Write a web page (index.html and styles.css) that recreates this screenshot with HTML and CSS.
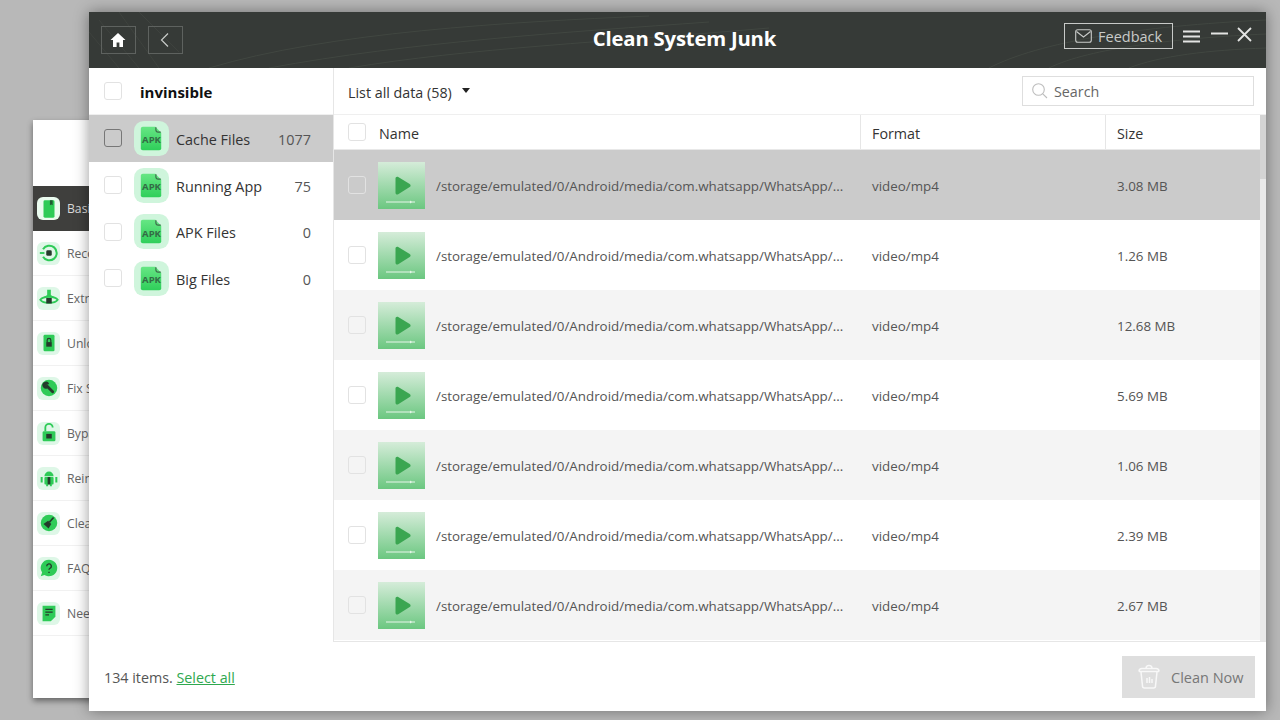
FILE: index.html
```html
<!DOCTYPE html>
<html lang="en">
<head>
<meta charset="utf-8">
<title>Clean System Junk</title>
<link rel="stylesheet" href="styles.css">
</head>
<body>
<svg width="0" height="0" class="defs">
  <defs>
    <linearGradient id="apkg" x1="0" y1="0" x2="0" y2="1"><stop offset="0" stop-color="#66e684"/><stop offset="1" stop-color="#2fcf5a"/></linearGradient>
    <linearGradient id="thumbg" x1="0" y1="0" x2="0" y2="1"><stop offset="0" stop-color="#d5ecd9"/><stop offset="1" stop-color="#6bc780"/></linearGradient>
    <symbol id="apk" viewBox="0 0 36 36">
      <rect width="36" height="36" rx="10" fill="#cff5dc"/>
      <path d="M7 8a2 2 0 0 1 2-2H22L28 12V28a2 2 0 0 1-2 2H9a2 2 0 0 1-2-2Z" fill="url(#apkg)"/>
      <path d="M22.500 6.500V9a2.500 2.500 0 0 0 2.500 2.500H27.500" fill="none" stroke="#3e6b4b" stroke-width="1.200"/>
    </symbol>
    <symbol id="thumb" viewBox="0 0 47 47">
      <rect width="47" height="47" fill="url(#thumbg)"/>
      <path d="M17.500 16.500c0-1.500 1.400-2.300 2.700-1.500l11.500 7c1.200.8 1.200 2.400 0 3.100l-11.500 7.100c-1.300.8-2.700 0-2.700-1.500Z" fill="#3aa651"/>
      <path d="M8 40H37" stroke="#e6f5e9" stroke-width="1"/>
      <path d="M32 38.500l2 1.500-2 1.500Z" fill="#e6f5e9"/>
    </symbol>
  </defs>
</svg>

<section class="back-window">
  <div class="back-top"></div>
  <ul class="back-list">
    <li class="back-item active"><span class="back-ico white"><svg viewBox="0 0 24 24"><path d="M6 4a1.500 1.500 0 0 1 1.500-1.500h9A1.500 1.500 0 0 1 18 4v16a1.500 1.500 0 0 1-1.500 1.500h-9A1.500 1.500 0 0 1 6 20z" fill="#2ecb57"/><path d="M13 2.500h3V8l-1.500-1L13 8z" fill="#1f5b33"/></svg></span><span>Basic</span></li>
    <li class="back-item"><span class="back-ico"><svg viewBox="0 0 24 24"><path d="M5.500 8a8 8 0 1 1 0 8" fill="none" stroke="#2ecb57" stroke-width="2.200"/><rect x="9" y="9" width="6" height="6" rx="1.500" fill="#243a2b"/><path d="M2 12h5" stroke="#2ecb57" stroke-width="2"/></svg></span><span>Recover</span></li>
    <li class="back-item"><span class="back-ico"><svg viewBox="0 0 24 24"><path d="M2.500 14c3-4.500 16-4.500 19 0-3 4.500-16 4.500-19 0Z" fill="none" stroke="#2ecb57" stroke-width="2"/><path d="M10 3h4v6h-4z" fill="#2ecb57"/><path d="M5.500 11.500l6.500-4 6.500 4z" fill="#2ecb57"/><rect x="9" y="12" width="6" height="6" fill="#243a2b"/></svg></span><span>Extract</span></li>
    <li class="back-item"><span class="back-ico"><svg viewBox="0 0 24 24"><rect x="6" y="3" width="12" height="18" rx="1.500" fill="#2ecb57"/><rect x="9" y="11" width="6" height="5" fill="#243a2b"/><path d="M10 11V9a2 2 0 0 1 4 0v2" fill="none" stroke="#243a2b" stroke-width="1.300"/></svg></span><span>Unlock</span></li>
    <li class="back-item"><span class="back-ico"><svg viewBox="0 0 24 24"><circle cx="12" cy="12" r="9" fill="#2ecb57"/><path d="M10 10l6 6" stroke="#243a2b" stroke-width="3.200" stroke-linecap="round"/><path d="M11.500 6.500a3.800 3.800 0 1 0 0 5l-3-2.300z" fill="#243a2b" transform="rotate(20 9 9)"/></svg></span><span>Fix System</span></li>
    <li class="back-item"><span class="back-ico"><svg viewBox="0 0 24 24"><rect x="5" y="10" width="14" height="11" rx="1.500" fill="#2ecb57"/><path d="M8 10V6a4 4 0 0 1 8 0" fill="none" stroke="#2ecb57" stroke-width="2"/><rect x="9" y="13" width="6" height="5" fill="#243a2b"/></svg></span><span>Bypass</span></li>
    <li class="back-item"><span class="back-ico"><svg viewBox="0 0 24 24"><path d="M7 10a5 5 0 0 1 10 0z" fill="#2ecb57"/><rect x="7" y="11" width="10" height="8" rx="1" fill="#2ecb57"/><path d="M4 11v6M20 11v6M10 18v3M14 18v3" stroke="#2ecb57" stroke-width="2.200"/><path d="M12 11v8" stroke="#243a2b" stroke-width="3"/></svg></span><span>Reinstall</span></li>
    <li class="back-item"><span class="back-ico"><svg viewBox="0 0 24 24"><circle cx="12" cy="12" r="9" fill="#2ecb57"/><path d="M17 6l-4.500 5" stroke="#243a2b" stroke-width="1.800"/><path d="M6 13l5-3.500 3.500 3.500-3 5z" fill="#243a2b"/></svg></span><span>Clean</span></li>
    <li class="back-item"><span class="back-ico"><svg viewBox="0 0 24 24"><path d="M12 3a9 9 0 1 1-5 16.500L3 21l1.500-4A9 9 0 0 1 12 3Z" fill="#2ecb57"/><path d="M9.500 10a2.500 2.500 0 1 1 3.500 2.300c-.7.400-1 .8-1 1.700M12 16v1.500" fill="none" stroke="#243a2b" stroke-width="1.500"/></svg></span><span>FAQ</span></li>
    <li class="back-item"><span class="back-ico"><svg viewBox="0 0 24 24"><path d="M5 4h14v12l-5 5H5z" fill="#2ecb57"/><path d="M8 8h8M8 11h8M8 14h4" stroke="#243a2b" stroke-width="1.500"/></svg></span><span>Need</span></li>
  </ul>
</section>

<main class="window">
  <header class="titlebar">
    <svg class="texture" viewBox="0 0 1177 56" preserveAspectRatio="none">
      <path d="M120 56C240 20 420 10 560 4M180 56C320 30 480 20 620 10M260 56C380 36 520 30 680 16M900 56C950 30 1050 14 1177 8M960 56C1000 36 1090 26 1177 22M1040 56C1070 44 1120 38 1177 36" fill="none" stroke="#4a5149" stroke-width="1"/>
      <path d="M0 20L30 56M10 8L50 56M30 0L70 56M50 0L90 40" fill="none" stroke="#454a45" stroke-width="1"/>
    </svg>
    <div class="nav-btns">
      <button class="nav-btn" aria-label="Home"><svg width="18" height="18" viewBox="0 0 18 18"><path d="M9 2 1.500 9H4v7h3.600v-4.500h2.800V16H14V9h2.500Z" fill="#fff"/></svg></button>
      <button class="nav-btn" aria-label="Back"><svg width="18" height="18" viewBox="0 0 18 18"><path d="M12 2.500 5.500 9l6.500 6.500" fill="none" stroke="#c9cbc9" stroke-width="1.200"/></svg></button>
    </div>
    <h1 class="title">Clean System Junk</h1>
    <div class="win-tools">
      <button class="feedback"><svg width="17" height="14" viewBox="0 0 17 14"><rect x=".7" y=".7" width="15.600" height="12.600" rx="2" fill="none" stroke="#c9cbc9" stroke-width="1.100"/><path d="M1.500 2.500 8.500 8l7-5.500" fill="none" stroke="#c9cbc9" stroke-width="1.100"/></svg><span>Feedback</span></button>
      <svg class="menu-ico" width="17" height="13" viewBox="0 0 17 13"><path d="M0 1.500h17M0 6.500h17M0 11.500h17" stroke="#e3e4e3" stroke-width="2"/></svg>
      <svg class="min-ico" width="17" height="13" viewBox="0 0 17 13"><path d="M0 1.500h17" stroke="#e3e4e3" stroke-width="2"/></svg>
      <svg class="close-ico" width="15" height="15" viewBox="0 0 15 15"><path d="M1 1l13 13M14 1 1 14" stroke="#e3e4e3" stroke-width="1.800"/></svg>
    </div>
  </header>

  <div class="content">
    <aside class="side">
      <div class="side-head"><span class="check"></span><strong class="low">invinsible</strong></div>
      <div class="side-row selected"><span class="check dark"></span><svg class="apk"><use href="#apk"/></svg><span class="apk-label">APK</span><span class="side-name low">Cache Files</span><span class="side-count low">1077</span></div>
      <div class="side-row"><span class="check"></span><svg class="apk"><use href="#apk"/></svg><span class="apk-label">APK</span><span class="side-name low">Running App</span><span class="side-count low">75</span></div>
      <div class="side-row"><span class="check"></span><svg class="apk"><use href="#apk"/></svg><span class="apk-label">APK</span><span class="side-name low">APK Files</span><span class="side-count low">0</span></div>
      <div class="side-row"><span class="check"></span><svg class="apk"><use href="#apk"/></svg><span class="apk-label">APK</span><span class="side-name low">Big Files</span><span class="side-count low">0</span></div>
    </aside>

    <section class="panel">
      <div class="toolbar">
        <div class="filter"><span class="low">List all data (58)</span><i class="caret"></i></div>
        <div class="search"><svg width="18" height="18" viewBox="0 0 18 18"><circle cx="7.500" cy="7.500" r="5.800" fill="none" stroke="#bdbdbd" stroke-width="1.100"/><path d="M11.800 11.800 16 16" stroke="#bdbdbd" stroke-width="1.100"/></svg><span>Search</span></div>
      </div>
      <div class="table-wrap">
        <div class="table">
          <div class="thead">
            <div class="th th-name"><span class="check"></span><span class="low">Name</span></div>
            <div class="th th-format"><span class="low">Format</span></div>
            <div class="th th-size"><span class="low">Size</span></div>
          </div>
          <div class="row current"><span class="check faint"></span><svg class="thumb"><use href="#thumb"/></svg><span class="path low">/storage/emulated/0/Android/media/com.whatsapp/WhatsApp/...</span><span class="fmt low">video/mp4</span><span class="size low">3.08 MB</span></div>
          <div class="row"><span class="check faint"></span><svg class="thumb"><use href="#thumb"/></svg><span class="path low">/storage/emulated/0/Android/media/com.whatsapp/WhatsApp/...</span><span class="fmt low">video/mp4</span><span class="size low">1.26 MB</span></div>
          <div class="row alt"><span class="check faint"></span><svg class="thumb"><use href="#thumb"/></svg><span class="path low">/storage/emulated/0/Android/media/com.whatsapp/WhatsApp/...</span><span class="fmt low">video/mp4</span><span class="size low">12.68 MB</span></div>
          <div class="row"><span class="check faint"></span><svg class="thumb"><use href="#thumb"/></svg><span class="path low">/storage/emulated/0/Android/media/com.whatsapp/WhatsApp/...</span><span class="fmt low">video/mp4</span><span class="size low">5.69 MB</span></div>
          <div class="row alt"><span class="check faint"></span><svg class="thumb"><use href="#thumb"/></svg><span class="path low">/storage/emulated/0/Android/media/com.whatsapp/WhatsApp/...</span><span class="fmt low">video/mp4</span><span class="size low">1.06 MB</span></div>
          <div class="row"><span class="check faint"></span><svg class="thumb"><use href="#thumb"/></svg><span class="path low">/storage/emulated/0/Android/media/com.whatsapp/WhatsApp/...</span><span class="fmt low">video/mp4</span><span class="size low">2.39 MB</span></div>
          <div class="row alt"><span class="check faint"></span><svg class="thumb"><use href="#thumb"/></svg><span class="path low">/storage/emulated/0/Android/media/com.whatsapp/WhatsApp/...</span><span class="fmt low">video/mp4</span><span class="size low">2.67 MB</span></div>
        </div>
        <div class="scrollbar"><div class="scroll-thumb"></div></div>
      </div>
    </section>
  </div>

  <footer class="footer">
    <div class="count low">134 items. <a href="#">Select all</a></div>
    <button class="clean"><svg width="24" height="26" viewBox="0 0 24 26"><path d="M2 7.500h20M4 8l1.500 14a2 2 0 0 0 2 2h9a2 2 0 0 0 2-2L20 8M2 7.500c0-2 1-3 3-3h14c2 0 3 1 3 3M9 4.500C9 2 10 1.500 12 1.500S15 2 15 4.500M10 14v5M12.500 13v6M15 15v4" fill="none" stroke="#f8f8f8" stroke-width="1.500"/></svg><span class="low">Clean Now</span></button>
  </footer>
</main>
</body>
</html>
```

FILE: styles.css
```css
* { box-sizing: border-box; }
html, body { margin: 0; padding: 0; }
body {
  width: 1280px;
  height: 720px;
  overflow: hidden;
  position: relative;
  background: #b8b8b8;
  font-family: "Open Sans", "Noto Sans", sans-serif;
  font-size: 14px;
  color: #333;
}
.defs { position: absolute; }
.low { padding-top: 2px; }

/* back window */
.back-window {
  position: absolute;
  left: 33px;
  top: 120px;
  width: 200px;
  height: 578px;
  background: #fff;
  box-shadow: 0 3px 6px rgba(0,0,0,.45);
}
.back-top { height: 66px; }
.back-list { list-style: none; margin: 0; padding: 0; }
.back-item {
  height: 45px;
  display: flex;
  align-items: center;
  gap: 7px;
  padding-left: 4px;
  border-bottom: 1px solid #f1f1f1;
  color: #666;
  font-size: 12.2px;
}
.back-item.active { background: #3f3f3d; color: #d9d9d9; border-bottom: 0; }
.back-ico {
  width: 23px;
  height: 23px;
  border-radius: 6px;
  background: #def7e7;
  display: flex;
  align-items: center;
  justify-content: center;
}
.back-ico svg { width: 22px; height: 22px; }
.back-ico.white { background: #eafbef; }

/* main window */
.window {
  position: absolute;
  left: 89px;
  top: 12px;
  width: 1177px;
  height: 699px;
  background: #fff;
  display: flex;
  flex-direction: column;
  box-shadow: 0 0 14px rgba(0,0,0,.4);
}
.titlebar {
  height: 56px;
  flex: none;
  background: #363a37;
  position: relative;
  display: flex;
  align-items: center;
  justify-content: space-between;
  padding: 0 14px 0 12px;
}
.texture { position: absolute; inset: 0; width: 100%; height: 100%; opacity: .55; }
.nav-btns { display: flex; gap: 12px; position: relative; }
.nav-btn {
  width: 35px;
  height: 28px;
  padding: 0 2px 0 0;
  background: transparent;
  border: 1px solid #5e625f;
  display: flex;
  align-items: center;
  justify-content: center;
}
.title {
  position: absolute;
  left: 0;
  right: 0;
  top: 11px;
  margin: 0;
  text-align: center;
  color: #fff;
  font-size: 20.3px;
  line-height: 30px;
  font-weight: 700;
  letter-spacing: -.2px;
  padding-left: 14px;
}
.win-tools { display: flex; align-items: center; position: relative; top: -4px; }
.feedback {
  width: 109px;
  height: 26px;
  padding: 0 0 0 10px;
  background: transparent;
  border: 1px solid #c8cac8;
  color: #c9cbc9;
  font: 14.5px "Open Sans", sans-serif;
  display: flex;
  align-items: center;
  gap: 6px;
  margin-right: 10px;
}
.menu-ico { margin-right: 11px; }
.min-ico { margin-right: 9px; position: relative; top: 2.500px; }
.close-ico { position: relative; top: -2px; }

/* content */
.content { flex: 1; display: flex; min-height: 0; }
.side { width: 245px; flex: none; border-right: 1px solid #e6e6e6; }
.side-head {
  height: 47px;
  display: flex;
  align-items: center;
  gap: 18px;
  padding-left: 15px;
  border-bottom: 1px solid #efefef;
  color: #111;
  font-size: 15px;
}
.check {
  width: 18px;
  height: 18px;
  flex: none;
  background: #fff;
  border: 1px solid #e2e2e2;
  border-radius: 3px;
}
.check.dark { background: transparent; border-color: #777; }
.check.faint { background: transparent; }
.side-row {
  height: 46.7px;
  position: relative;
  display: flex;
  align-items: center;
  padding: 0 22px 0 15px;
}
.side-row.selected { background: #cbcbcb; }
.apk { width: 35px; height: 35px; margin-left: 12px; flex: none; }
.apk-label {
  position: absolute;
  left: 45px;
  top: 50%;
  width: 35px;
  text-align: center;
  transform: translateY(-3px);
  font-size: 9.5px;
  line-height: 10px;
  font-weight: 700;
  color: #336b45;
}
.side-name { margin-left: 7px; flex: 1; color: #333; font-size: 14.4px; }
.side-count { color: #555; font-size: 14.4px; }

/* right panel */
.panel { flex: 1; min-width: 0; display: flex; flex-direction: column; }
.toolbar {
  height: 47px;
  flex: none;
  display: flex;
  align-items: center;
  justify-content: space-between;
  padding: 0 12px 0 14px;
  border-bottom: 1px solid #efefef;
}
.filter { display: flex; align-items: center; gap: 10px; font-size: 14.3px; color: #333; }
.caret {
  width: 0;
  height: 0;
  border-left: 4.500px solid transparent;
  border-right: 4.500px solid transparent;
  border-top: 5px solid #222;
  margin-bottom: 1px;
}
.search {
  width: 232px;
  height: 30px;
  border: 1px solid #dedede;
  display: flex;
  align-items: center;
  gap: 5px;
  padding-left: 8px;
  color: #666;
  font-size: 14.3px;
}
.table-wrap { flex: 1; display: flex; min-height: 0; overflow: hidden; border-bottom: 1px solid #e6e6e6; }
.table { flex: 1; min-width: 0; }
.thead { height: 35px; display: flex; border-bottom: 1px solid #e8e8e8; color: #333; font-size: 14.3px; }
.th { display: flex; align-items: center; border-right: 1px solid #e6e6e6; }
.th-name { width: 527px; padding-left: 14px; gap: 13px; }
.th-format { width: 245px; padding-left: 11px; }
.th-size { flex: 1; padding-left: 11px; border-right: 0; }
.row {
  height: 70px;
  display: flex;
  align-items: center;
  padding-left: 14px;
  font-size: 13.37px;
  color: #555;
}
.row.alt { background: #f4f4f4; }
.row.current { background: #cbcbcb; }
.thumb { width: 47px; height: 47px; margin-left: 12px; flex: none; }
.path { width: 424px; margin-left: 11px; flex: none; white-space: nowrap; }
.fmt { width: 245px; margin-left: 12px; flex: none; }
.scrollbar { width: 6px; flex: none; background: #e9e9e9; }
.scroll-thumb { height: 64px; background: #d4d4d4; }

/* footer */
.footer {
  height: 69px;
  flex: none;
  display: flex;
  align-items: center;
  justify-content: space-between;
  padding: 0 11px 0 15px;
}
.count { color: #555; font-size: 14.3px; }
.count a { color: #2fa84f; text-decoration: underline; }
.clean {
  width: 133px;
  height: 42px;
  padding: 0 0 0 15px;
  border: 0;
  background: #dedede;
  color: #777;
  font: 14.5px "Open Sans", sans-serif;
  display: flex;
  align-items: center;
  gap: 10px;
}
```
